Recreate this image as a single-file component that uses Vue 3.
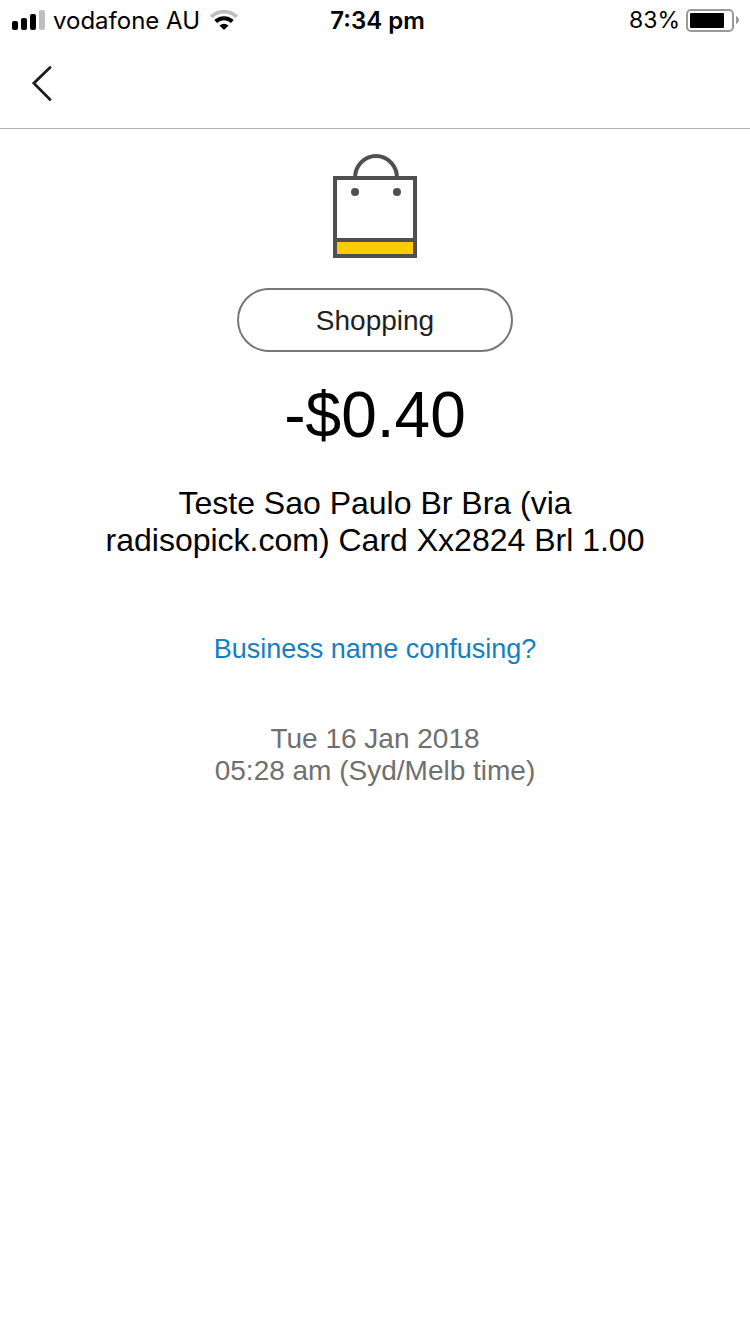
<template>
  <div class="screen">
    <div class="status-bar">
      <div class="status-left">
        <svg class="signal" width="33" height="20" viewBox="0 0 33 20">
          <rect x="0" y="11" width="6" height="9" rx="2" />
          <rect x="9" y="8" width="6" height="12" rx="2" />
          <rect x="18" y="4" width="6" height="16" rx="2" />
          <rect x="27" y="0" width="6" height="20" rx="2" fill="#bfbfbf" />
        </svg>
        <span class="carrier">{{ status.carrier }}</span>
        <svg class="wifi" width="28" height="20" viewBox="0 0 28 20">
          <path d="M1.1 6.9a18.4 18.4 0 0 1 25.8 0" fill="none" stroke="#bfbfbf" stroke-width="3.6" />
          <path d="M5.7 11.5a11.9 11.9 0 0 1 16.6 0" fill="none" stroke="#000" stroke-width="4" />
          <path d="M9.4 15.5q4.6-3.6 9.2 0L14 20z" />
        </svg>
      </div>
      <div class="status-time">{{ status.time }}</div>
      <div class="status-right">
        <span>{{ status.battery }}%</span>
        <svg width="53" height="24" viewBox="0 0 53 24">
          <rect x="1" y="2" width="46" height="21" rx="4" fill="none" stroke="#999" stroke-width="2" />
          <rect x="4" y="5" :width="Math.round(status.battery * 0.41)" height="15" rx="1" />
          <path d="M50 8c4 2 4 6 0 8z" fill="#999" />
        </svg>
      </div>
    </div>

    <header class="nav-bar">
      <button class="back" type="button" aria-label="Back">
        <svg width="20" height="36" viewBox="0 0 20 36">
          <path d="M18 1.5L1.8 17.2L18 33.5" fill="none" stroke="#1c1b1d" stroke-width="2.8" stroke-linecap="round" />
        </svg>
      </button>
    </header>

    <main class="detail">
      <svg class="bag" width="84" height="104" viewBox="0 0 84 104">
        <path d="M22 24a21 22 0 0 1 42 0" fill="none" stroke="#4f4f4f" stroke-width="4" />
        <rect x="2" y="24" width="80" height="78" fill="#fff" stroke="#4f4f4f" stroke-width="4" />
        <rect x="4" y="88" width="76" height="12" fill="#fc0" />
        <rect x="4" y="84" width="76" height="4" fill="#4f4f4f" />
        <circle cx="22" cy="38" r="4" fill="#4f4f4f" />
        <circle cx="64" cy="38" r="4" fill="#4f4f4f" />
      </svg>
      <button class="category" type="button">{{ transaction.category }}</button>
      <div class="amount">{{ transaction.amount }}</div>
      <h1 class="description">{{ transaction.description }}</h1>
      <a class="help-link" href="#">Business name confusing?</a>
      <div class="date">
        <div>{{ transaction.date }}</div>
        <div>{{ transaction.time }}</div>
      </div>
    </main>
  </div>
</template>

<script setup>
import { reactive } from "vue";

const status = reactive({
  carrier: "vodafone AU",
  time: "7:34 pm",
  battery: 83,
});

const transaction = reactive({
  category: "Shopping",
  amount: "-$0.40",
  description: "Teste Sao Paulo Br Bra (via radisopick.com) Card Xx2824 Brl 1.00",
  date: "Tue 16 Jan 2018",
  time: "05:28 am (Syd/Melb time)",
});
</script>

<style>
body {
  margin: 0;
  background: #fff;
}
</style>

<style scoped>
.screen {
  min-height: 100vh;
  background: #fff;
  color: #000;
  font-family: "Helvetica Neue", "Liberation Sans", Arial, sans-serif;
}
.status-bar {
  display: grid;
  grid-template-columns: 1fr auto 1fr;
  align-items: center;
  height: 40px;
  padding: 0 11px 0 12px;
  font-family: Inter, sans-serif;
  font-size: 24px;
}
.status-left,
.status-right {
  display: flex;
  align-items: center;
  gap: 8px;
}
.status-right {
  justify-content: flex-end;
  gap: 6px;
  font-size: 23px;
}
.wifi {
  margin-left: 2px;
}
.status-time {
  padding-left: 4px;
  font-weight: 600;
}
.nav-bar {
  display: flex;
  align-items: center;
  height: 88px;
  padding: 0 32px;
  border-bottom: 1px solid #b0b0b0;
}
.back {
  display: flex;
  padding: 0;
  border: 0;
  background: none;
  cursor: pointer;
}
.detail {
  display: flex;
  flex-direction: column;
  align-items: center;
  padding: 25px 80px;
  text-align: center;
}
.category {
  min-width: 276px;
  height: 64px;
  margin-top: 30px;
  padding: 2px 24px 0;
  border: 2px solid #777;
  border-radius: 32px;
  background: #fff;
  color: #231f20;
  font-family: inherit;
  font-size: 28px;
  cursor: pointer;
}
.amount {
  margin-top: 27px;
  font-size: 64px;
  line-height: 72px;
}
.description {
  max-width: 580px;
  margin: 34px 0 0;
  font-size: 32px;
  font-weight: 400;
  line-height: 37px;
}
.help-link {
  margin-top: 74px;
  color: #1480c4;
  font-size: 27px;
  font-weight: 300;
  line-height: 32px;
  text-decoration: none;
}
.date {
  margin-top: 58px;
  color: #6f6f6f;
  font-size: 28px;
  line-height: 32px;
}
</style>
